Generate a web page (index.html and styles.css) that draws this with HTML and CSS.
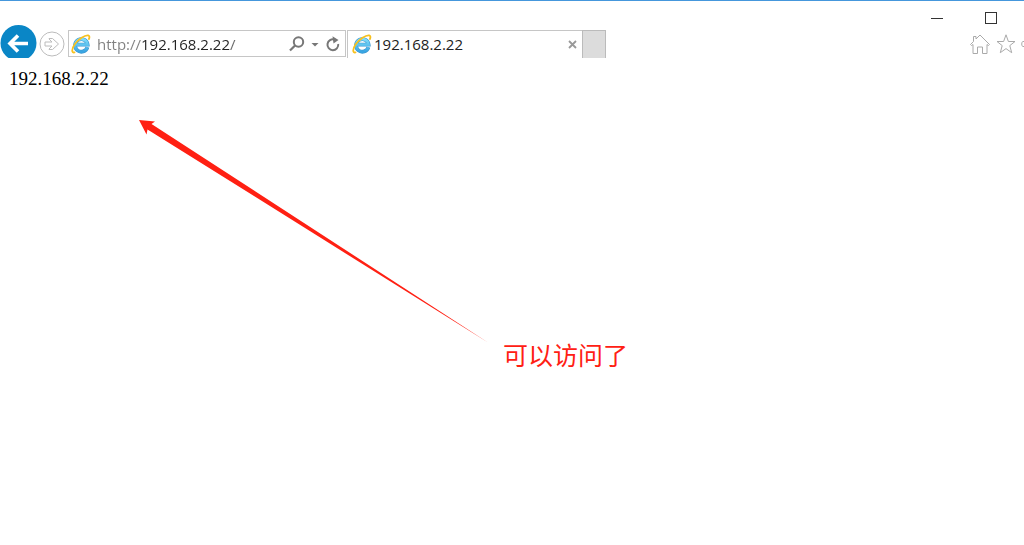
FILE: index.html
```html
<!DOCTYPE html>
<html lang="zh-CN">
<head>
<meta charset="utf-8">
<title>192.168.2.22</title>
<link rel="stylesheet" href="styles.css">
</head>
<body>
<header class="chrome">
  <svg class="defs" aria-hidden="true">
    <defs>
      <linearGradient id="blue" x1="0" y1="0" x2="0" y2="1">
        <stop offset="0" stop-color="#7fdcfa"/><stop offset="1" stop-color="#38a4e2"/>
      </linearGradient>
      <symbol id="ie" viewBox="0 0 20 20">
        <path d="M16.4 13.2A6.3 6.3 0 1 1 16.6 10.6H5.2" fill="none" stroke="#3a96cf" stroke-width="3.800"/>
        <path d="M16.4 13.2A6.3 6.3 0 1 1 16.6 10.6H5.2" fill="none" stroke="url(#blue)" stroke-width="2.600"/>
        <path d="M3.500 18.400C.4 19.200 .5 15 3.600 10.600 7 5.500 14 .7 17.500 1.500 18.700 1.900 18.600 3.500 17.900 5" fill="none" stroke="#f7c01e" stroke-width="1.800" stroke-linecap="round"/>
      </symbol>
    </defs>
  </svg>
  <div class="caption">
    <button class="plain" aria-label="Minimize"><svg width="14" height="14" viewBox="0 0 14 14"><path d="M1 7.500H13" stroke="#333"/></svg></button>
    <button class="plain" aria-label="Maximize"><svg width="14" height="14" viewBox="0 0 14 14"><rect x="1.500" y="1.500" width="11" height="11" fill="none" stroke="#333"/></svg></button>
  </div>
  <div class="toolbar">
    <button class="plain back" aria-label="Back"><svg width="37" height="33" viewBox="0 0 37 33"><circle cx="18.500" cy="18" r="18" fill="#0a86c6"/><path d="M10 18.500H28M18 10.500L10 18.500L18 26.500" fill="none" stroke="#fff" stroke-width="3.600"/></svg></button>
    <button class="plain forward" aria-label="Forward"><svg width="26" height="26" viewBox="0 0 26 26"><circle cx="13" cy="13" r="12" fill="#fff" stroke="#bcbcbc"/><path d="M6 11H13L10 8V7.500H13.500L19.500 13L13.500 18.500H10V18L13 15H6Z" fill="none" stroke="#bcbcbc"/></svg></button>
    <form class="address">
      <svg class="logo" width="20" height="20"><use href="#ie"/></svg>
      <input class="url" type="text" aria-label="Address" value="http://192.168.2.22/">
      <button class="plain" type="button" aria-label="Search"><svg width="16" height="16" viewBox="0 0 16 16"><circle cx="9.500" cy="6" r="4.700" fill="none" stroke="#777" stroke-width="2"/><path d="M6.300 9.200L1 14.500" stroke="#777" stroke-width="2.200"/></svg></button>
      <button class="plain" type="button" aria-label="Address list"><svg width="8" height="16" viewBox="0 0 8 16"><path d="M.5 7H7.500L4 10.500Z" fill="#777"/></svg></button>
      <button class="plain" type="button" aria-label="Refresh"><svg width="16" height="16" viewBox="0 0 16 16"><path d="M13.200 8A5.400 5.400 0 1 1 9.500 3.600" fill="none" stroke="#777" stroke-width="2"/><path d="M7.500 .2L13.500 4L8.500 7.500Z" fill="#777"/></svg></button>
    </form>
    <div class="tab">
      <svg class="logo" width="20" height="20"><use href="#ie"/></svg>
      <span class="tab-title">192.168.2.22</span>
      <button class="plain" aria-label="Close tab"><svg width="9" height="9" viewBox="0 0 9 9"><path d="M1 1L8 8M8 1L1 8" stroke="#999" stroke-width="1.800"/></svg></button>
    </div>
    <button class="new-tab" aria-label="New tab"></button>
    <nav class="tools">
      <button class="plain" aria-label="Home"><svg width="22" height="22" viewBox="0 0 22 22"><path d="M1.500 11.500L4.500 8.500V3.500H7V6L11 2L20.500 11.500L19.500 12.500L18 11.500V20.500H13.500V14H8.500V20.500H4V11.500L2.500 12.500Z" fill="none" stroke="#aaa"/></svg></button>
      <button class="plain" aria-label="Favorites"><svg width="20" height="22" viewBox="0 0 20 22"><path d="M10 1.800L12.400 8.500H19L13.800 12.600L15.700 19.700L10 15.600L4.300 19.700L6.200 12.600L1 8.500H7.600Z" fill="none" stroke="#aaa"/></svg></button>
      <button class="plain" aria-label="Tools"><svg width="20" height="22" viewBox="0 0 20 22"><path d="M4 8.500H2L.8 9.500V12.500L2 13.500H4" fill="none" stroke="#aaa"/><circle cx="10" cy="11" r="6" fill="none" stroke="#aaa"/></svg></button>
    </nav>
  </div>
</header>
<main class="page">
  <p class="content">192.168.2.22</p>
  <svg class="arrow" width="500" height="300" viewBox="0 0 500 300" aria-hidden="true">
    <path d="M139 62L155 63.500L151.500 66L488 284.500L147.500 71.500L146.500 76.500Z" fill="#ff2013"/>
  </svg>
  <p class="note">可以访问了</p>
</main>
</body>
</html>
```
FILE: styles.css
```css
* { box-sizing: border-box; }
body {
  display: flex;
  flex-direction: column;
  min-height: 100vh;
  margin: 0;
  background: #fff;
  color: #222;
  font-family: "Open Sans", "Noto Sans CJK SC", sans-serif;
  font-size: 15px;
}
.defs { position: absolute; width: 0; height: 0; }
svg { display: block; flex: none; }
.chrome { border-top: 1px solid #4597dc; overflow: hidden; }
.plain { padding: 0; border: 0; background: none; flex: none; }
.caption {
  display: flex;
  justify-content: flex-end;
  gap: 40px;
  height: 24px;
  padding: 9px 26px 0 0;
}
.toolbar { display: flex; height: 33px; align-items: flex-end; }
.back { margin-right: 2px; }
.forward { margin-right: 3px; padding-bottom: 1px; }
.address {
  display: flex;
  align-items: center;
  width: 278px;
  height: 27px;
  margin-bottom: 1px;
  padding: 0 4px 0 2px;
  border: 1px solid #c6c6c6;
  gap: 6px;
}
.url {
  flex: 1;
  min-width: 0;
  height: 24px;
  padding: 0;
  border: 0;
  outline: 0;
  font: inherit;
  color: transparent;
  background: linear-gradient(90deg, #808080 45px, #222 45px, #222 133px, #666 133px);
  -webkit-background-clip: text;
  background-clip: text;
}
.tab {
  display: flex;
  align-items: center;
  gap: 2px;
  width: 235px;
  height: 28px;
  margin-left: 1px;
  padding: 0 5px 1px 4px;
  border: solid #c6c6c6;
  border-width: 1px 0 0 1px;
}
.tab-title { flex: 1; }
.new-tab {
  width: 24px;
  height: 28px;
  padding: 0;
  border: 1px solid #bbb;
  border-bottom: 0;
  background: #dcdcdc;
}
.tools {
  display: flex;
  gap: 5px;
  margin: 0 -17px 3px auto;
}
.page { position: relative; flex: 1; padding: 10px 9px; }
.content {
  margin: 0;
  color: #000;
  font: 19px/22px "Liberation Serif", serif;
}
.arrow { position: absolute; left: 0; top: 0; }
.note {
  position: absolute;
  left: 503px;
  top: 278px;
  margin: 0;
  color: #ff2013;
  font: 25px/36px "Noto Sans CJK SC", sans-serif;
}
```
